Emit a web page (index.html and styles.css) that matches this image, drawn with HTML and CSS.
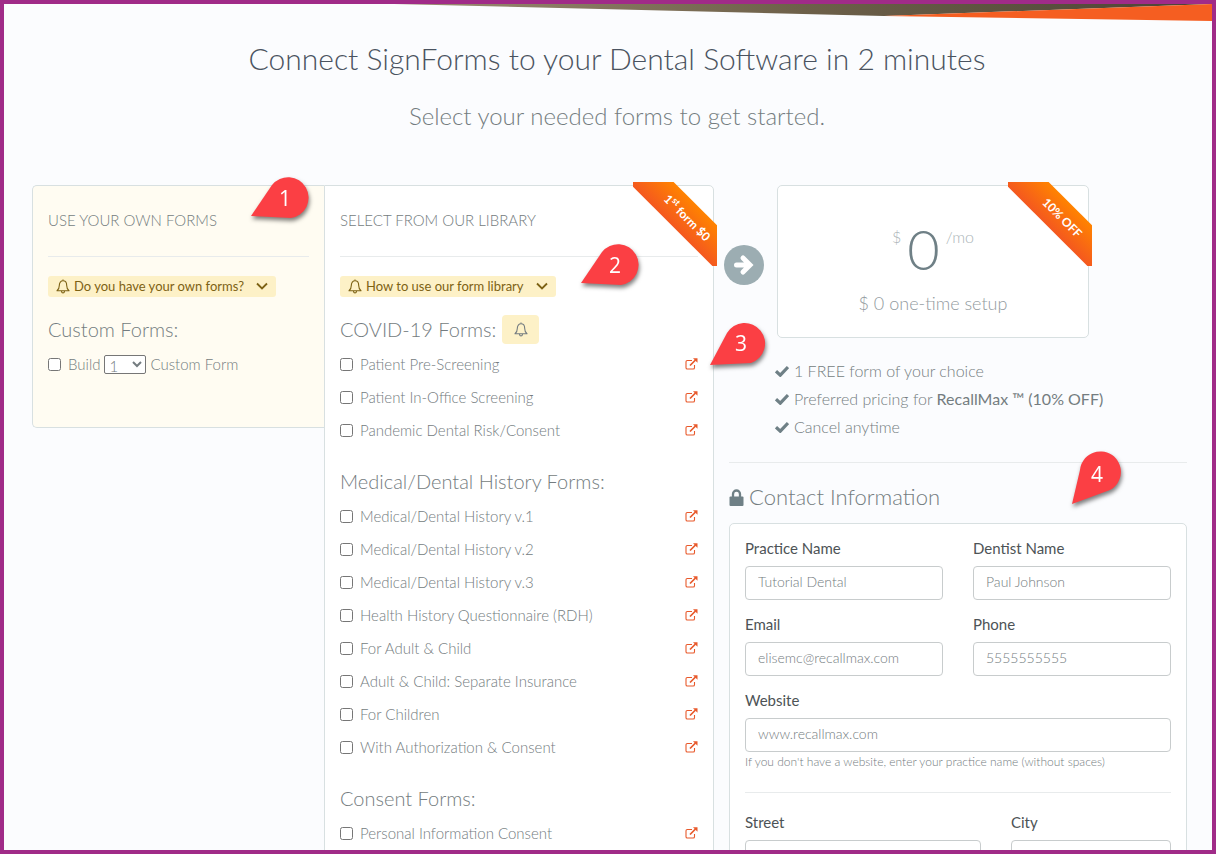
FILE: index.html
```html
<!DOCTYPE html>
<html lang="en">
<head>
  <meta charset="UTF-8">
  <meta name="viewport" content="width=device-width, initial-scale=1.0">
  <title>SignForms</title>
  <link rel="stylesheet" href="styles.css">
</head>
<body>
  <!-- shared icons -->
  <svg class="icon-defs" aria-hidden="true">
    <symbol id="icon-bell" viewBox="0 0 14 15">
      <path d="M7 .5v1.300M1 11.800c1.500-1.200 2.300-3 2.300-5.300C3.300 3.600 4.800 1.800 7 1.800s3.700 1.800 3.700 4.700c0 2.300.8 4.100 2.300 5.300zM5.500 12.200c.1 1.100.7 1.700 1.500 1.700s1.400-.6 1.500-1.700" fill="none" stroke="currentColor" stroke-width="1.100" stroke-linejoin="round"/>
    </symbol>
    <symbol id="icon-chevron" viewBox="0 0 12 8">
      <path d="M1 1.500l5 5 5-5" fill="none" stroke="currentColor" stroke-width="1.800"/>
    </symbol>
    <symbol id="icon-external" viewBox="0 0 13 12">
      <path d="M7 2.500H2.300Q1 2.500 1 3.800v5.900Q1 11 2.300 11h5.900q1.300 0 1.300-1.300V7" fill="none" stroke="currentColor" stroke-width="1.100"/>
      <path d="M5 7.500L10.500 2" stroke="currentColor" stroke-width="1.700"/>
      <path d="M8 .3h4.500v4.500z" fill="currentColor"/>
    </symbol>
    <symbol id="icon-check" viewBox="0 0 14 12">
      <path d="M1 6.200l4.300 4L13 2" fill="none" stroke="currentColor" stroke-width="3.200"/>
    </symbol>
  </svg>

  <div class="page">
    <svg class="top-shape" viewBox="0 0 1208 18" preserveAspectRatio="none" aria-hidden="true">
      <defs>
        <linearGradient id="shade">
          <stop offset="0" stop-color="#9c8b72"/>
          <stop offset="0.500" stop-color="#6d6049"/>
          <stop offset="1" stop-color="#4c4435"/>
        </linearGradient>
      </defs>
      <path d="M390 0H1208L880 12Z" fill="url(#shade)"/>
      <path d="M880 12L1208 0V17Z" fill="#f55e21"/>
    </svg>

    <header class="intro">
      <h1>Connect SignForms to your Dental Software in 2 minutes</h1>
      <p>Select your needed forms to get started.</p>
    </header>

    <main class="content">
      <div class="forms">
        <section class="card own-forms">
          <h2>USE YOUR OWN FORMS</h2>
          <hr>
          <button type="button" class="hint">
            <svg class="bell"><use href="#icon-bell"/></svg>
            Do you have your own forms?
            <svg class="chevron"><use href="#icon-chevron"/></svg>
          </button>
          <h3>Custom Forms:</h3>
          <div class="form-row">
            <input type="checkbox" id="custom">
            <label for="custom">Build</label>
            <select id="customCount" aria-label="Number of custom forms">
              <option>1</option>
              <option>2</option>
              <option>3</option>
            </select>
            <label for="customCount">Custom Form</label>
          </div>
        </section>

        <section class="card library">
          <div class="ribbon"><span>1<sup>st</sup> form $0</span></div>
          <h2>SELECT FROM OUR LIBRARY</h2>
          <hr>
          <button type="button" class="hint">
            <svg class="bell"><use href="#icon-bell"/></svg>
            How to use our form library
            <svg class="chevron"><use href="#icon-chevron"/></svg>
          </button>

          <h3>COVID-19 Forms:
            <button type="button" class="bell-btn" aria-label="About COVID-19 forms"><svg class="bell"><use href="#icon-bell"/></svg></button>
          </h3>
          <ul class="form-list">
            <li class="form-row"><input type="checkbox" id="f1"><label for="f1">Patient Pre-Screening</label><a href="#" aria-label="Preview"><svg><use href="#icon-external"/></svg></a></li>
            <li class="form-row"><input type="checkbox" id="f2"><label for="f2">Patient In-Office Screening</label><a href="#" aria-label="Preview"><svg><use href="#icon-external"/></svg></a></li>
            <li class="form-row"><input type="checkbox" id="f3"><label for="f3">Pandemic Dental Risk/Consent</label><a href="#" aria-label="Preview"><svg><use href="#icon-external"/></svg></a></li>
          </ul>

          <h3>Medical/Dental History Forms:</h3>
          <ul class="form-list">
            <li class="form-row"><input type="checkbox" id="f4"><label for="f4">Medical/Dental History v.1</label><a href="#" aria-label="Preview"><svg><use href="#icon-external"/></svg></a></li>
            <li class="form-row"><input type="checkbox" id="f5"><label for="f5">Medical/Dental History v.2</label><a href="#" aria-label="Preview"><svg><use href="#icon-external"/></svg></a></li>
            <li class="form-row"><input type="checkbox" id="f6"><label for="f6">Medical/Dental History v.3</label><a href="#" aria-label="Preview"><svg><use href="#icon-external"/></svg></a></li>
            <li class="form-row"><input type="checkbox" id="f7"><label for="f7">Health History Questionnaire (RDH)</label><a href="#" aria-label="Preview"><svg><use href="#icon-external"/></svg></a></li>
            <li class="form-row"><input type="checkbox" id="f8"><label for="f8">For Adult &amp; Child</label><a href="#" aria-label="Preview"><svg><use href="#icon-external"/></svg></a></li>
            <li class="form-row"><input type="checkbox" id="f9"><label for="f9">Adult &amp; Child: Separate Insurance</label><a href="#" aria-label="Preview"><svg><use href="#icon-external"/></svg></a></li>
            <li class="form-row"><input type="checkbox" id="f10"><label for="f10">For Children</label><a href="#" aria-label="Preview"><svg><use href="#icon-external"/></svg></a></li>
            <li class="form-row"><input type="checkbox" id="f11"><label for="f11">With Authorization &amp; Consent</label><a href="#" aria-label="Preview"><svg><use href="#icon-external"/></svg></a></li>
          </ul>

          <h3>Consent Forms:</h3>
          <ul class="form-list">
            <li class="form-row"><input type="checkbox" id="f12"><label for="f12">Personal Information Consent</label><a href="#" aria-label="Preview"><svg><use href="#icon-external"/></svg></a></li>
          </ul>
        </section>
      </div>

      <div class="order">
        <svg class="arrow" viewBox="0 0 40 40" aria-hidden="true">
          <circle cx="20" cy="20" r="20" fill="#9cadb2"/>
          <path d="M12.500 20h12M19 13l7 7-7 7" fill="none" stroke="#fff" stroke-width="5" stroke-linecap="round" stroke-linejoin="miter"/>
        </svg>
        <section class="card price">
          <div class="ribbon"><span>10% OFF</span></div>
          <p class="amount"><span class="unit">$</span><strong>0</strong><span class="unit">/mo</span></p>
          <p class="setup">$ 0 one-time setup</p>
        </section>
        <ul class="benefits">
          <li><svg><use href="#icon-check"/></svg>1 FREE form of your choice</li>
          <li><svg><use href="#icon-check"/></svg><span>Preferred pricing for <b>RecallMax ™ (10% OFF)</b></span></li>
          <li><svg><use href="#icon-check"/></svg>Cancel anytime</li>
        </ul>
        <hr>
        <h2 class="contact-title">
          <svg viewBox="0 0 14 17" aria-hidden="true">
            <path d="M3.500 8V5a3.500 3.500 0 0 1 7 0v3" fill="none" stroke="currentColor" stroke-width="2.300"/>
            <rect y="7.500" width="14" height="9.500" rx="1" fill="currentColor"/>
          </svg>
          Contact Information
        </h2>
        <form class="card contact">
          <div class="fields">
            <div class="field">
              <label for="practice">Practice Name</label>
              <input type="text" id="practice" value="Tutorial Dental">
            </div>
            <div class="field">
              <label for="dentist">Dentist Name</label>
              <input type="text" id="dentist" value="Paul Johnson">
            </div>
            <div class="field">
              <label for="email">Email</label>
              <input type="email" id="email" value="elisemc@recallmax.com">
            </div>
            <div class="field">
              <label for="phone">Phone</label>
              <input type="tel" id="phone" value="5555555555">
            </div>
            <div class="field wide">
              <label for="website">Website</label>
              <input type="text" id="website" value="www.recallmax.com">
              <small>If you don't have a website, enter your practice name (without spaces)</small>
            </div>
          </div>
          <hr>
          <div class="fields address">
            <div class="field">
              <label for="street">Street</label>
              <input type="text" id="street">
            </div>
            <div class="field">
              <label for="city">City</label>
              <input type="text" id="city">
            </div>
          </div>
        </form>
      </div>
    </main>

    <!-- numbered step markers -->
    <svg class="pin pin-1" viewBox="0 0 60 48"><path d="M0 39L21 8A20.500 20.500 0 1 1 40 41Z"/><text x="34" y="29">1</text></svg>
    <svg class="pin pin-2" viewBox="0 0 60 48"><path d="M0 39L21 8A20.500 20.500 0 1 1 40 41Z"/><text x="34" y="29">2</text></svg>
    <svg class="pin pin-3" viewBox="0 0 60 48"><path d="M0 43L17 11A20.500 20.500 0 1 1 41 41Z"/><text x="31" y="29">3</text></svg>
    <svg class="pin pin-4" viewBox="0 0 54 56"><path d="M1 53L9 19A20.500 20.500 0 1 1 39 39Z"/><text x="26" y="31">4</text></svg>
  </div>
</body>
</html>
```
FILE: styles.css
```css
:root {
  --frame: #a02b88;
  --bg: #fbfcfe;
  --heading: #4a5360;
  --text: #747c80;
  --icon: #6f8086;
  --line: #e8ebec;
  --border: #d8e0e1;
  --orange: #e8592b;
  --hint-bg: #fdf1c7;
  --hint-text: #7d6214;
}

* {
  box-sizing: border-box;
}

body {
  margin: 0;
  font-family: Lato, "Liberation Sans", sans-serif;
  font-size: 16px;
  font-weight: 300;
  line-height: 20px;
  color: var(--text);
}

h1, h2, h3, p, ul {
  margin: 0;
  padding: 0;
  font-weight: 300;
}

ul {
  list-style: none;
}

hr {
  margin: 0;
  border: 0;
  border-top: 1px solid var(--line);
}

input, select, button {
  font: inherit;
  color: inherit;
}

.icon-defs {
  display: none;
}

.page {
  position: relative;
  height: 100vh;
  overflow: hidden;
  border: 4px solid var(--frame);
  background: var(--bg);
}

.top-shape {
  display: block;
  width: 100%;
  height: 18px;
}

.intro {
  padding: 14px 0 48px 18px;
  text-align: center;
}

.intro h1 {
  font-size: 30px;
  line-height: 44px;
  color: var(--heading);
}

.intro p {
  margin-top: 18px;
  font-size: 24px;
  line-height: 36px;
}

.content {
  display: grid;
  grid-template-columns: 682fr 458fr;
  gap: 15px;
  padding: 3px 25px 0 28px;
  align-items: start;
}

.card {
  position: relative;
  border: 1px solid var(--border);
  border-radius: 5px;
  background: #fff;
}

.forms {
  display: grid;
  grid-template-columns: 292fr 390fr;
  align-items: start;
}

.own-forms,
.library {
  padding: 23px 15px 53px;
}

.own-forms {
  border-right: 0;
  border-radius: 5px 0 0 5px;
  background: #fffcf2;
}

.library {
  border-radius: 0 5px 5px 0;
}

.forms h2 {
  margin-bottom: 25px;
  font-size: 15px;
  line-height: 22px;
}

.forms h3 {
  display: flex;
  align-items: center;
  gap: 6px;
  height: 30px;
  margin: 17px 0 10px;
  font-size: 20px;
}

.form-list + h3 {
  margin-top: 26px;
}

.hint {
  display: flex;
  align-items: center;
  gap: 4px;
  height: 21px;
  margin-top: 19px;
  padding: 0 8px 1px;
  border: 0;
  border-radius: 3px;
  background: var(--hint-bg);
  font-size: 13px;
  font-weight: 400;
  color: var(--hint-text);
}

.bell {
  width: 14px;
  height: 15px;
}

.chevron {
  width: 12px;
  height: 8px;
  margin-left: 8px;
}

.bell-btn {
  display: flex;
  align-items: center;
  justify-content: center;
  width: 37px;
  height: 29px;
  padding: 0;
  border: 0;
  border-radius: 4px;
  background: var(--hint-bg);
}

.form-row {
  display: flex;
  align-items: center;
  height: 20px;
  font-size: 15px;
}

.form-list .form-row + .form-row {
  margin-top: 13px;
}

.form-row input {
  width: 13px;
  height: 13px;
  margin: 0 7px 0 0;
}

.form-row a {
  display: flex;
  margin-left: auto;
  color: var(--orange);
}

.form-row a svg {
  width: 13px;
  height: 12px;
}

.form-row select {
  width: 42px;
  height: 19px;
  margin: 0 4px;
  padding: 0;
  border: 1px solid #767676;
  border-radius: 2px;
  background: #fff;
  line-height: 16px;
}

.ribbon {
  position: absolute;
  top: -4px;
  right: -4px;
  width: 84px;
  height: 84px;
  overflow: hidden;
}

.ribbon span {
  position: absolute;
  top: 20px;
  right: -42px;
  width: 144px;
  background: linear-gradient(#ff8300, #f4581f);
  font-size: 12px;
  font-weight: 700;
  line-height: 32px;
  text-align: center;
  color: #fff;
  transform: rotate(45deg);
}

.ribbon sup {
  font-size: 9px;
  line-height: 0;
}

.order {
  position: relative;
}

.arrow {
  position: absolute;
  top: 60px;
  left: -5px;
  width: 40px;
  height: 40px;
}

.price {
  height: 153px;
  margin: 0 98px 0 48px;
  padding-top: 36px;
  text-align: center;
}

.amount {
  display: flex;
  justify-content: center;
  gap: 6px;
  line-height: 54px;
}

.amount strong {
  font-size: 56px;
  font-weight: 300;
  color: var(--icon);
}

.amount .unit {
  line-height: 30px;
  color: #abb5b8;
}

.setup {
  margin-top: 17px;
  font-size: 18px;
  color: #929a9e;
}

.benefits {
  margin: 19px 0 21px 46px;
  font-size: 16px;
  line-height: 28px;
}

.benefits li {
  display: flex;
  align-items: center;
  gap: 5px;
}

.benefits svg {
  width: 14px;
  height: 12px;
  color: var(--icon);
}

.benefits b {
  font-weight: 400;
}

.contact-title {
  display: flex;
  align-items: center;
  gap: 5px;
  margin: 19px 0 11px;
  font-size: 22px;
  line-height: 30px;
}

.contact-title svg {
  width: 15px;
  height: 17px;
  color: var(--icon);
}

.contact {
  padding: 14px 15px 40px;
}

.fields {
  display: grid;
  grid-template-columns: 1fr 1fr;
  gap: 14px 30px;
}

.fields.address {
  grid-template-columns: 236fr 160fr;
}

.field {
  display: flex;
  flex-direction: column;
}

.field.wide {
  grid-column: 1 / -1;
}

.field label {
  margin-bottom: 8px;
  font-size: 15px;
  font-weight: 400;
  color: #4d5356;
}

.field input {
  width: 100%;
  height: 34px;
  padding: 0 12px 4px;
  border: 1px solid #c8cccd;
  border-radius: 4px;
  background: #fff;
  font-size: 14px;
}

.field small {
  font-size: 12px;
}

.contact hr {
  margin: 20px 0 19px;
}

/* Step markers float over the page */
.pin {
  position: absolute;
  width: 60px;
  height: 48px;
  overflow: visible;
  fill: #fb3f44;
  filter: drop-shadow(1px 3px 2px rgba(0, 0, 0, 0.5));
}

.pin text {
  fill: #fff;
  font-family: "Open Sans", sans-serif;
  font-size: 21px;
  font-weight: 400;
  text-anchor: middle;
}

.pin-1 {
  top: 173px;
  left: 247px;
}

.pin-2 {
  top: 240px;
  left: 577px;
}

.pin-3 {
  top: 318px;
  left: 706px;
}

.pin-4 {
  top: 447px;
  left: 1067px;
  width: 54px;
  height: 56px;
}
```
